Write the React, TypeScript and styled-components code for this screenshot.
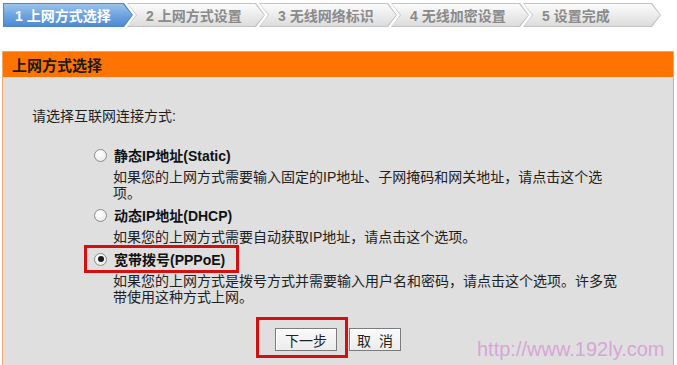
import styled, { createGlobalStyle } from "styled-components";

const Global = createGlobalStyle`
    html, body {
        margin: 0;
        padding: 0;
        background: #ffffff;
        overflow: hidden;
    }
    body {
        font-family: "Liberation Sans", "Noto Sans CJK SC", sans-serif;
        color: #1e1e1e;
    }
`;

const Page = styled.div`
    padding: 3px 2px 0 2px;
    position: relative;
`;

const Steps = styled.div`
    display: flex;
    margin-left: 1px;
    height: 24px;
`;

const arrow = (notch: boolean) =>
    notch
        ? "polygon(0 0, calc(100% - 9px) 0, 100% 50%, calc(100% - 9px) 100%, 0 100%, 9px 50%)"
        : "polygon(0 0, calc(100% - 9px) 0, 100% 50%, calc(100% - 9px) 100%, 0 100%)";

const StepEdge = styled.div<{ $first?: boolean; $active?: boolean }>`
    width: ${p => (p.$first ? 130 : 138)}px;
    margin-left: ${p => (p.$first ? 0 : -6)}px;
    height: 24px;
    padding: 1px;
    box-sizing: border-box;
    background: ${p => (p.$active ? "#4f86c6" : "#c4c4c4")};
    clip-path: ${p => arrow(!p.$first)};
`;

const StepFace = styled.div<{ $first?: boolean; $active?: boolean }>`
    height: 100%;
    display: flex;
    align-items: center;
    padding-left: ${p => (p.$first ? 11 : 18)}px;
    box-sizing: border-box;
    font-size: 14px;
    font-weight: bold;
    white-space: nowrap;
    clip-path: ${p => arrow(!p.$first)};
    color: ${p => (p.$active ? "#ffffff" : "#8a8a8a")};
    background: ${p =>
        p.$active
            ? "linear-gradient(#9cc4ee, #6ea4e0 50%, #4f8ad2)"
            : "linear-gradient(#fbfbfb, #ececec 50%, #dcdcdc)"};
`;

const Panel = styled.div`
    margin-top: 24px;
    border-left: 1px solid #f0a868;
    border-right: 1px solid #f0a868;
    width: 672px;
    box-sizing: border-box;
`;

const PanelHead = styled.div`
    height: 26px;
    background: #ff7300;
    border-top: 1px solid #ffa050;
    box-sizing: border-box;
    display: flex;
    align-items: center;
    padding-left: 9px;
    font-size: 15px;
    font-weight: bold;
    color: #1a1a1a;
`;

const PanelBody = styled.div`
    background: #dfdfdf;
    height: 300px;
    padding: 31px 0 0 29px;
    box-sizing: border-box;
    position: relative;
`;

const Intro = styled.div`
    font-size: 14px;
    line-height: 16px;
`;

const Options = styled.div`
    margin-top: 17px;
    margin-left: 52px;
`;

const OptionRow = styled.div<{ $mark?: boolean }>`
    display: inline-flex;
    align-items: center;
    gap: 7px;
    height: 22px;
    padding: 0 11px 0 7px;
    border: 3px solid ${p => (p.$mark ? "#d40f0f" : "transparent")};
    font-size: 14px;
    font-weight: bold;
    color: #111;
`;

const Radio = styled.span<{ $on?: boolean }>`
    width: 13px;
    height: 13px;
    border-radius: 50%;
    box-sizing: border-box;
    border: 1px solid #8c8c8c;
    background: radial-gradient(circle at 40% 35%, #ffffff, #e6e6e6);
    display: flex;
    align-items: center;
    justify-content: center;
    &::after {
        content: "";
        width: 6px;
        height: 6px;
        border-radius: 50%;
        background: ${p => (p.$on ? "#1a1a1a" : "transparent")};
    }
`;

const Desc = styled.div`
    margin-left: 29px;
    width: 510px;
    font-size: 14px;
    line-height: 16px;
    color: #222;
`;

const Buttons = styled.div`
    display: flex;
    align-items: flex-start;
    margin-top: 12px;
    margin-left: 224px;
`;

const Mark = styled.div`
    border: 3px solid #d40f0f;
    padding: 8px 8px 4px 16px;
`;

const Button = styled.button<{ $w: number }>`
    width: ${p => p.$w}px;
    height: 23px;
    margin: 0;
    padding: 0;
    font-family: "Liberation Sans", "Noto Sans CJK SC", sans-serif;
    font-size: 14px;
    color: #222;
    background: linear-gradient(#fafafa, #ececec);
    border: 1px solid #7c7c7c;
    box-shadow: inset 1px 1px 0 #ffffff;
    white-space: pre;
`;

const Side = styled.div`
    margin-top: 11px;
    margin-left: 1px;
`;

const Watermark = styled.div`
    position: absolute;
    left: 474px;
    top: 261px;
    font-family: "Liberation Sans", Arial, sans-serif;
    font-size: 20px;
    color: #d6a6d6;
    white-space: nowrap;
`;

const steps = ["1 上网方式选择", "2 上网方式设置", "3 无线网络标识", "4 无线加密设置", "5 设置完成"];

const options = [
    {
        label: "静态IP地址(Static)",
        desc: "如果您的上网方式需要输入固定的IP地址、子网掩码和网关地址，请点击这个选项。",
    },
    {
        label: "动态IP地址(DHCP)",
        desc: "如果您的上网方式需要自动获取IP地址，请点击这个选项。",
    },
    {
        label: "宽带拨号(PPPoE)",
        desc: "如果您的上网方式是拨号方式并需要输入用户名和密码，请点击这个选项。许多宽带使用这种方式上网。",
    },
];

export default function App() {
    const selected = 2;

    return (
        <>
            <Global />
            <Page>
                <Steps>
                    {steps.map((s, i) => (
                        <StepEdge key={s} $first={i === 0} $active={i === 0}>
                            <StepFace $first={i === 0} $active={i === 0}>
                                {s}
                            </StepFace>
                        </StepEdge>
                    ))}
                </Steps>
                <Panel>
                    <PanelHead>上网方式选择</PanelHead>
                    <PanelBody>
                        <Intro>请选择互联网连接方式:</Intro>
                        <Options>
                            {options.map((o, i) => (
                                <div key={o.label}>
                                    <OptionRow $mark={i === selected}>
                                        <Radio $on={i === selected} />
                                        {o.label}
                                    </OptionRow>
                                    <Desc>{o.desc}</Desc>
                                </div>
                            ))}
                        </Options>
                        <Buttons>
                            <Mark>
                                <Button $w={62}>下一步</Button>
                            </Mark>
                            <Side>
                                <Button $w={52}>{"取  消"}</Button>
                            </Side>
                        </Buttons>
                        <Watermark>http://www.192ly.com</Watermark>
                    </PanelBody>
                </Panel>
            </Page>
        </>
    );
}
